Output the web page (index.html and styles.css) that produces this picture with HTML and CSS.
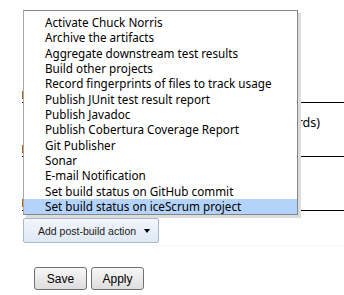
FILE: index.html
```html
<!DOCTYPE html>
<html>
<head>
    <title>Post-build Actions</title>
    <link rel="stylesheet" href="styles.css">
</head>
<body>
    <div class="page">
        <div class="section section-first"><span class="mark"></span></div>
        <div class="section"><span class="mark"></span><span class="note">(keep records)</span></div>
        <div class="section"><span class="mark"></span></div>

        <button class="post-build" type="button">Add post-build action <span class="caret"></span></button>
        <div class="divider"></div>

        <div class="actions">
            <button class="action-button" type="button">Save</button>
            <button class="action-button" type="button">Apply</button>
        </div>

        <ul class="menu">
            <li>Activate Chuck Norris</li>
            <li>Archive the artifacts</li>
            <li>Aggregate downstream test results</li>
            <li>Build other projects</li>
            <li>Record fingerprints of files to track usage</li>
            <li>Publish JUnit test result report</li>
            <li>Publish Javadoc</li>
            <li>Publish Cobertura Coverage Report</li>
            <li>Git Publisher</li>
            <li>Sonar</li>
            <li>E-mail Notification</li>
            <li>Set build status on GitHub commit</li>
            <li class="selected">Set build status on iceScrum project</li>
        </ul>
    </div>
</body>
</html>
```

FILE: styles.css
```css
body {
    margin: 0;
    background-color: #ffffff;
    font-family: "Liberation Sans", Arial, sans-serif;
}

.page {
    position: relative;
    width: 344px;
    height: 295px;
    padding-left: 22px;
    box-sizing: border-box;
    overflow: hidden;
}

/* form rows behind the dropdown */
.section {
    display: flex;
    height: 53px;
    border-bottom: 1px solid #000000;
}

.section-first {
    margin-top: 49px;
}

.mark {
    align-self: flex-end;
    width: 2px;
    height: 8px;
    margin-bottom: 3px;
    background-color: #b5651d;
}

.note {
    align-self: flex-start;
    margin: 11px 24px 0 auto;
    font-family: "Noto Sans", sans-serif;
    font-size: 12.5px;
    color: #000000;
}

.post-build {
    display: flex;
    align-items: center;
    width: 136px;
    height: 25px;
    margin: 7px 0 0 1px;
    padding: 0 0 0 14px;
    border: 1px solid #a7b8cf;
    border-radius: 2px;
    background: linear-gradient(#f2f6fc, #dfe8f5);
    font-family: "Liberation Sans", Arial, sans-serif;
    font-size: 10.5px;
    color: #1a1a1a;
    box-sizing: border-box;
}

.caret {
    width: 0;
    height: 0;
    margin-left: 8px;
    border-left: 3.5px solid transparent;
    border-right: 3.5px solid transparent;
    border-top: 4px solid #000000;
}

.divider {
    margin-top: 2px;
    border-top: 1px dotted #f0f0f0;
}

.actions {
    display: flex;
    gap: 4px;
    margin: 21px 0 0 12px;
}

.action-button {
    width: 53px;
    height: 23px;
    padding: 0;
    border: 1px solid #707070;
    border-radius: 3px;
    background: linear-gradient(#f7f7f7, #dddddd);
    font-family: "Liberation Sans", Arial, sans-serif;
    font-size: 12px;
    color: #000000;
}

/* dropdown list of post-build actions */
.menu {
    position: absolute;
    top: 10px;
    left: 23px;
    width: 275px;
    margin: 0;
    padding: 4px 0 0 0;
    list-style: none;
    background-color: #ffffff;
    border: 1px solid #858585;
    border-left-color: #a8a8a8;
    box-shadow: 3px 3px 0 #dcdcdc;
    box-sizing: border-box;
    font-family: "Noto Sans", sans-serif;
    font-size: 11.7px;
    color: #000000;
}

.menu li {
    height: 15.35px;
    line-height: 15.35px;
    padding-left: 21px;
    white-space: nowrap;
}

.menu li.selected {
    background-color: #b3d3fb;
}
```
